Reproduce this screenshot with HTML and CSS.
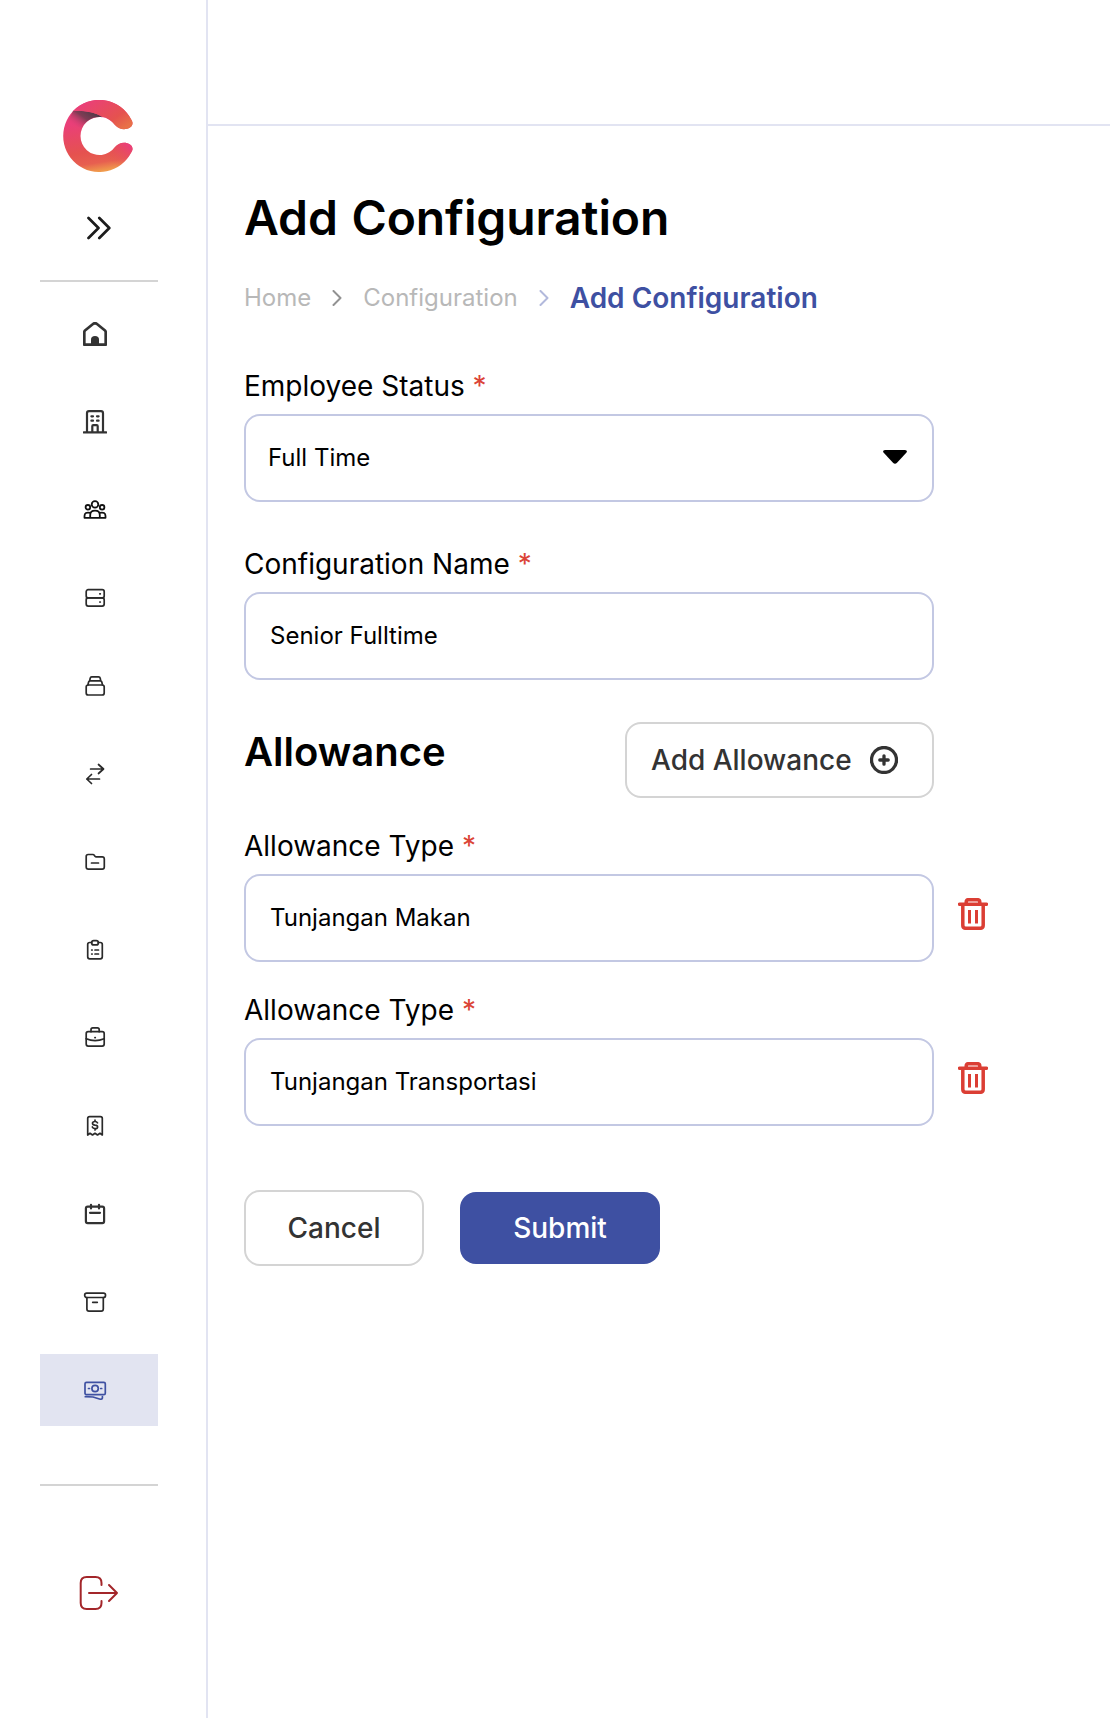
FILE: index.html
```html
<!DOCTYPE html>
<html lang="en">
<head>
<meta charset="utf-8">
<title>Add Configuration</title>
<link rel="stylesheet" href="styles.css">
</head>
<body>
<div class="app">
  <aside class="sidebar">
    <svg class="logo" viewBox="0 0 70 72">
      <defs>
        <linearGradient id="ring" x1="0.3" y1="0" x2="0.45" y2="1">
          <stop offset="0.3" stop-color="#ea3f79"/><stop offset="0.72" stop-color="#e5524f"/><stop offset="0.88" stop-color="#e75f50"/><stop offset="1" stop-color="#f09a4c"/>
        </linearGradient>
        <linearGradient id="top" x1="0" y1="0" x2="1" y2="0.75">
          <stop offset="0.15" stop-color="#ea3f79"/><stop offset="0.75" stop-color="#e5524f"/><stop offset="1" stop-color="#e87048"/>
        </linearGradient>
        <linearGradient id="tail" x1="0" y1="1" x2="1" y2="0">
          <stop offset="0.35" stop-color="#e5524f" stop-opacity="0"/><stop offset="0.9" stop-color="#ea3f79"/>
        </linearGradient>
        <linearGradient id="shade" x1="1" y1="0.2" x2="0.1" y2="0.8">
          <stop offset="0.1" stop-color="#503a47"/><stop offset="0.5" stop-color="#803c55"/><stop offset="1" stop-color="#ea3f79" stop-opacity="0"/>
        </linearGradient>
      </defs>
      <path fill="url(#ring)" d="M68.200 19.500A36 36 0 1 0 68.200 52.500C72 47 67 42.700 61 42.700C57 42.700 54.500 44.500 52 47A19 19 0 1 1 52 25C55 28 58 29.200 61 29.200C67 29.200 72 25 68.200 19.500Z"/>
      <path fill="url(#tail)" d="M36 72A36 36 0 0 0 68.200 52.500C72 47 67 42.700 61 42.700C57 42.700 54.500 44.500 52 47A19 19 0 0 1 36.500 55Z"/>
      <path fill="url(#shade)" d="M10 11C20 10 32 12 39.500 17.200C30 15.500 22 21 19 28L4 24Z"/>
      <path fill="url(#top)" d="M10 11.100A36 36 0 0 1 68.200 19.500C72 25 67 29.200 61 29.200C58 29.200 55 28 52 25C49 20.500 44 17.500 39 16.500C30 11.500 20 10.500 10 11.100Z"/>
    </svg>
    <svg class="expand" viewBox="0 0 24 24"><path d="M1.500 2 11.500 12 1.500 22M12.300 2 22.300 12 12.300 22"/></svg>
    <hr class="rule">
    <nav class="menu">
      <a class="item"><svg class="icon bold" viewBox="0 0 24 24"><path d="M1.300 22.700V10.200Q1.300 9.200 2 8.500L10 2Q12 .500 14 2L22 8.500Q22.700 9.200 22.700 10.200V22.700Z"/><path class="solid" d="M8 23V17.500Q8 14 12 14T16 17.500V23Z"/></svg></a>
      <a class="item"><svg class="icon mid" viewBox="0 0 24 24"><path d="M.800 22.300H23.200M4 22V3.200Q4 1.200 6 1.200H18Q20 1.200 20 3.200V22M9.300 22V16.200Q9.300 15.200 10.300 15.200H13.700Q14.700 15.200 14.700 16.200V22M8.400 6.300H10M14 6.300H15.600M8.400 10.700H10M14 10.700H15.600"/></svg></a>
      <a class="item"><svg class="icon people" viewBox="0 0 24 24"><circle cx="12" cy="6.400" r="3.300"/><circle cx="4.900" cy="9.300" r="2.300"/><circle cx="19.100" cy="9.300" r="2.300"/><path d="M7.200 19.800V17Q7.200 12.700 12 12.700T16.800 17V19.800M7.200 14.800Q1.500 13.600 1.500 18V19.800H22.500V18Q22.500 13.600 16.800 14.800"/></svg></a>
      <a class="item"><svg class="icon" viewBox="0 0 24 24"><rect x="3.200" y="3.700" width="18" height="8.200" rx="2"/><rect x="3.200" y="11.900" width="18" height="8.200" rx="2"/><path d="M16.800 7.800H17.300M16.800 16H17.300"/></svg></a>
      <a class="item"><svg class="icon" viewBox="0 0 24 24"><rect x="3.200" y="11" width="18" height="10" rx="2"/><path d="M4.900 11 5.600 8Q5.900 6.900 7 6.900H17.400Q18.500 6.900 18.800 8L19.500 11M6.700 6.900 7.200 4.200Q7.500 2.800 8.700 2.800H15.600Q16.900 2.800 17.200 4.200L17.700 6.900"/></svg></a>
      <a class="item"><svg class="icon" viewBox="0 0 24 24"><path d="M7.600 7H20.500M15.500 2.500 20.500 7 15.500 11.500M16.500 17H3.800M8.500 12.500 3.800 17 8.500 21.500"/></svg></a>
      <a class="item"><svg class="icon" viewBox="0 0 24 24"><path d="M3.200 6.500Q3.200 4.500 5.200 4.500H9.800Q10.800 4.500 11.400 5.400L12 6.200Q12.500 6.900 13.300 6.900H19.200Q21.300 6.900 21.300 9V17Q21.300 19.100 19.200 19.100H5.300Q3.200 19.100 3.200 17ZM8.500 13H15.500"/></svg></a>
      <a class="item"><svg class="icon" viewBox="0 0 24 24"><path d="M8.600 4.500H6.700Q4.700 4.500 4.700 6.500V18.800Q4.700 20.800 6.700 20.800H17.300Q19.300 20.800 19.300 18.800V6.500Q19.300 4.500 17.300 4.500H15.400M8.700 12H9.200M8.700 16H9.200M12 12H15.500M12 16H15.500"/><rect x="8.700" y="2.700" width="6.600" height="4.200" rx="2"/></svg></a>
      <a class="item"><svg class="icon" viewBox="0 0 24 24"><rect x="3.200" y="5.700" width="18" height="14.400" rx="2"/><path d="M8 5.700V3.700Q8 1.900 9.800 1.900H14.400Q16.200 1.900 16.200 3.700V5.700M3.200 12.700Q12 16.500 21.200 12.700M11.900 11.600H12.300"/></svg></a>
      <a class="item"><svg class="icon" viewBox="0 0 24 24"><path d="M4.700 21V4.600Q4.700 2.700 6.600 2.700H17.400Q19.300 2.700 19.300 4.600V21L17 19.300 14.500 21 12 19.300 9.500 21 7 19.300ZM14.500 8.800Q13.800 7.500 12 7.500Q9.500 7.500 9.500 9.200T12 11.100Q14.600 11.200 14.600 12.900T12 14.600Q9.900 14.600 9.300 13M12 6V7.500M12 14.600V16"/></svg></a>
      <a class="item"><svg class="icon mid" viewBox="0 0 24 24"><rect x="2.900" y="4.700" width="18.200" height="16.400" rx="1.800"/><path d="M8 2.800V6.500M16 2.800V6.500M7 10.800H17"/></svg></a>
      <a class="item"><svg class="icon" viewBox="0 0 24 24"><rect x="1.700" y="3.100" width="20.800" height="4.400" rx="2"/><path d="M3.900 7.500V19Q3.900 21.100 6 21.100H18.200Q20.300 21.100 20.300 19V7.500M9.700 12.300H14.300"/></svg></a>
      <a class="item active"><svg class="icon" viewBox="0 0 24 24"><rect x="2" y="4.300" width="20.300" height="12.400" rx="1.500"/><circle cx="12.100" cy="10.500" r="3.200"/><path d="M5.500 10.500H6.500M17.700 10.500H18.700M2.300 18.700 10 19 17.300 21.200Q19 21.500 19.400 20V18.500"/></svg></a>
    </nav>
    <hr class="rule">
    <svg class="logout" viewBox="0 0 40 36"><path d="M22.500 10V8Q22.500 2 16.500 2H7.700Q1.700 2 1.700 8V28Q1.700 34 7.700 34H16.500Q22.500 34 22.500 28V26M10 18H38M30 10 38 18 30 26"/></svg>
  </aside>
  <div class="page">
    <header class="topbar"></header>
    <main class="content">
      <h1 class="title">Add Configuration</h1>
      <nav class="crumbs">
        <span class="crumb">Home</span>
        <svg class="sep" viewBox="0 0 10 16"><path d="M1.500 1 8.500 8 1.500 15"/></svg>
        <span class="crumb">Configuration</span>
        <svg class="sep light" viewBox="0 0 10 16"><path d="M1.500 1 8.500 8 1.500 15"/></svg>
        <span class="current">Add Configuration</span>
      </nav>
      <form class="form">
        <div class="field">
          <label class="label">Employee Status <span class="req">*</span></label>
          <div class="box select"><span>Full Time</span><svg class="caret" viewBox="0 0 24 14"><path d="M2 0H22Q25 .500 23.300 2.800L14 12.700Q12 14.700 10 12.700L.700 2.800Q-1 .500 2 0Z"/></svg></div>
        </div>
        <div class="field">
          <label class="label">Configuration Name <span class="req">*</span></label>
          <div class="box">Senior Fulltime</div>
        </div>
        <div class="section">
          <h2 class="subtitle">Allowance</h2>
          <button class="btn add" type="button">Add Allowance<svg class="plus" viewBox="0 0 28 28"><circle cx="14" cy="14" r="12.500"/><path d="M14 9.800V18.200M9.800 14H18.200"/></svg></button>
        </div>
        <div class="allowances">
          <div class="field">
            <label class="label">Allowance Type <span class="req">*</span></label>
            <div class="line"><div class="box">Tunjangan Makan</div><svg class="trash" viewBox="0 0 30 32"><path d="M1.500 6.300H28.500M8.200 6V4Q8.200 1.700 10.500 1.700H19.500Q21.800 1.700 21.800 4V6M4.800 7V27.300Q4.800 30.300 7.800 30.300H22.200Q25.200 30.300 25.200 27.300V7"/><path class="butt" d="M11.500 12V25.500M18.500 12V25.500"/></svg></div>
          </div>
          <div class="field">
            <label class="label">Allowance Type <span class="req">*</span></label>
            <div class="line"><div class="box">Tunjangan Transportasi</div><svg class="trash" viewBox="0 0 30 32"><path d="M1.500 6.300H28.500M8.200 6V4Q8.200 1.700 10.500 1.700H19.500Q21.800 1.700 21.800 4V6M4.800 7V27.300Q4.800 30.300 7.800 30.300H22.200Q25.200 30.300 25.200 27.300V7"/><path class="butt" d="M11.500 12V25.500M18.500 12V25.500"/></svg></div>
          </div>
        </div>
        <div class="actions">
          <button class="btn cancel" type="button">Cancel</button>
          <button class="btn submit" type="button">Submit</button>
        </div>
      </form>
    </main>
  </div>
</div>
</body>
</html>
```
FILE: styles.css
```css
* { box-sizing: border-box; }
body { margin: 0; background: #fff; color: #000; font-family: Inter, "Liberation Sans", sans-serif; }
svg { display: block; flex: none; fill: none; stroke-linecap: round; stroke-linejoin: round; }
.app { display: flex; min-height: 1718px; }

.sidebar { display: flex; flex-direction: column; width: 208px; padding: 100px 48px 0 40px; border-right: 2px solid #e2e4f2; }
.logo { width: 70px; height: 72px; margin-left: 23px; }
.expand { width: 24px; height: 24px; margin: 44px 0 40px 47px; stroke: #1c1c1c; stroke-width: 2.7; }
.rule { width: 118px; height: 2px; margin: 0; border: 0; background: #d4d4d4; }
.menu { display: flex; flex-direction: column; gap: 16px; padding: 16px 0 58px; }
.item { display: flex; align-items: center; width: 118px; height: 72px; padding-left: 43px; color: #2a2a2a; }
.active { background: #e2e4f1; color: #3e50a2; }
.icon { width: 24px; height: 24px; stroke: currentColor; stroke-width: 1.7; }
.icon.bold { stroke-width: 2.7; color: #333; }
.icon.mid { stroke-width: 2.2; color: #333; }
.icon.people { stroke-width: 1.8; color: #111; }
.solid { fill: currentColor; stroke: none; }
.logout { width: 40px; height: 36px; margin: 89px 0 0 39px; stroke: #a3262a; stroke-width: 2; }

.page { flex: 1; }
.topbar { height: 126px; border-bottom: 2px solid #e2e4f2; }
.content { padding: 62px 36px 0; }
.title { margin: 0; font-size: 48px; line-height: 60px; font-weight: 600; letter-spacing: -0.1px; word-spacing: 1.6px; }
.crumbs { display: flex; align-items: center; height: 40px; margin-top: 30px; font-size: 24px; color: #b8b8b8; }
.crumb { padding-bottom: 2px; }
.sep { width: 10px; height: 16px; margin: 0 21px; stroke: #929292; stroke-width: 2; }
.light { stroke: #b2b9dc; }
.current { font-size: 28px; font-weight: 600; color: #3e50a2; }

.form { width: 690px; margin-top: 48px; }
.field + .field { margin-top: 42px; }
.label { display: block; height: 40px; margin-bottom: 8px; font-size: 28px; line-height: 40px; white-space: pre; }
.req { color: #db4437; }
.box { display: flex; flex: none; align-items: center; width: 690px; height: 88px; padding: 0 24px 2px; border: 2px solid #c3c8e3; border-radius: 16px; font-size: 24px; }
.select { justify-content: space-between; padding: 0 25px 2px 22px; }
.caret { width: 24px; height: 14px; fill: #000; }
.section { display: flex; justify-content: space-between; align-items: flex-start; margin: 42px 0 28px; }
.subtitle { margin: 0; font-size: 40px; line-height: 60px; font-weight: 600; }
.btn { display: flex; align-items: center; justify-content: center; height: 76px; padding: 0; border: 2px solid #d4d4d4; border-radius: 16px; background: #fff; color: #333; font: 500 28px Inter, "Liberation Sans", sans-serif; }
.add { width: 309px; justify-content: flex-start; gap: 18px; padding-left: 24px; }
.plus { width: 28px; height: 28px; stroke: #333; stroke-width: 3.3; }
.allowances .field + .field { margin-top: 28px; }
.line { display: flex; gap: 24px; }
.trash { width: 30px; height: 32px; margin-top: 24px; stroke: #db3e34; stroke-width: 3.5; }
.butt { stroke-linecap: butt; stroke-width: 3; }
.actions { display: flex; align-items: center; gap: 36px; margin-top: 64px; }
.cancel { width: 180px; }
.submit { width: 200px; height: 72px; border: 0; background: #3e50a2; color: #fff; }
```
